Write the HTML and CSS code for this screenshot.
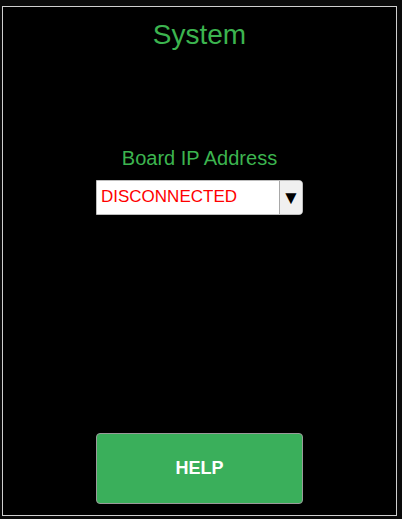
FILE: index.html
```html
<!DOCTYPE html>
<html>
<head>
<meta charset="utf-8">
<link rel="stylesheet" href="styles.css">
</head>
<body>
<div class="panel">
  <h1 class="title">System</h1>
  <div class="field">
    <div class="label">Board IP Address</div>
    <div class="select">
      <span class="value">DISCONNECTED</span>
      <span class="arrow">&#9660;</span>
    </div>
  </div>
  <div class="spacer"></div>
  <button class="help">HELP</button>
</div>
</body>
</html>
```
FILE: styles.css
```css
html, body {
  margin: 0;
  padding: 0;
  background: #0a0a0a;
}
body {
  font-family: "Liberation Sans", Arial, sans-serif;
}
.panel {
  box-sizing: border-box;
  margin: 6px 0 0 2px;
  width: 395px;
  height: 510px;
  border: 1px solid #cfcfcf;
  background: #000;
  display: flex;
  flex-direction: column;
  align-items: center;
}
.title {
  margin: 12px 0 0 0;
  font-size: 28px;
  font-weight: normal;
  line-height: 32px;
  color: #3cb44f;
}
.field {
  margin-top: 95px;
  display: flex;
  flex-direction: column;
  align-items: center;
}
.label {
  font-size: 20px;
  line-height: 24px;
  color: #3cb44f;
  margin-bottom: 10px;
}
.select {
  box-sizing: border-box;
  width: 207px;
  height: 35px;
  background: #fff;
  border: 1px solid #bdbdbd;
  border-radius: 0 4px 4px 0;
  display: flex;
  align-items: stretch;
}
.value {
  flex: 1;
  color: #ff0000;
  font-size: 17px;
  line-height: 31px;
  padding-left: 4px;
}
.arrow {
  width: 22px;
  background: #f0f0f0;
  border-left: 1px solid #a8a8a8;
  border-radius: 0 3px 3px 0;
  color: #000;
  font-size: 19px;
  line-height: 33px;
  text-align: center;
}
.spacer {
  flex: 1;
}
.help {
  box-sizing: border-box;
  width: 207px;
  height: 71px;
  margin: 0 0 11px 0;
  background: #3aaf5b;
  border: 1px solid #9a9a9a;
  border-radius: 4px;
  color: #fff;
  font-family: "Liberation Sans", Arial, sans-serif;
  font-weight: bold;
  font-size: 18px;
  padding: 0;
}
```
